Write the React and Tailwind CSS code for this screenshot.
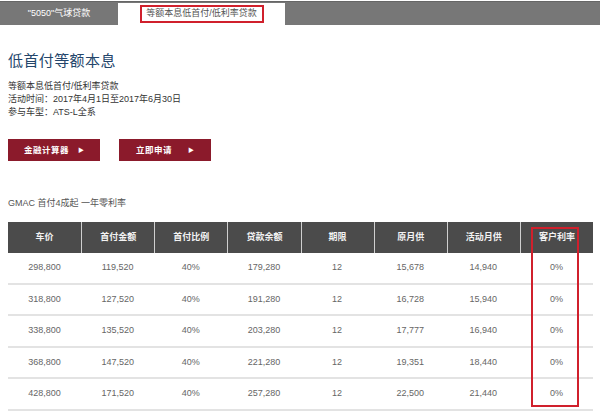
const rows = [
  ['298,800', '119,520', '40%', '179,280', '12', '15,678', '14,940', '0%'],
  ['318,800', '127,520', '40%', '191,280', '12', '16,728', '15,940', '0%'],
  ['338,800', '135,520', '40%', '203,280', '12', '17,777', '16,940', '0%'],
  ['368,800', '147,520', '40%', '221,280', '12', '19,351', '18,440', '0%'],
  ['428,800', '171,520', '40%', '257,280', '12', '22,500', '21,440', '0%'],
];

const heads = ['车价', '首付金额', '首付比例', '贷款余额', '期限', '原月供', '活动月供', '客户利率'];

function RedButton({ label, gap }) {
  return (
    <button className={'flex items-center justify-center w-[92px] h-[22px] bg-[#8b1a2b] text-white text-[8.5px] font-bold ' + gap}>
      <span className="tracking-[0.5px]">{label}</span>
      <span className="text-[6px]">▶</span>
    </button>
  );
}

export default function App() {
  return (
    <div
      className="w-[600px] h-[415px] bg-white overflow-hidden"
      style={{ fontFamily: '"Liberation Sans", "Noto Sans CJK SC", sans-serif' }}
    >
      {/* tabs */}
      <div className="mt-[1px] h-[24px] flex items-end bg-[#777777] border-t border-[#666666]">
        <div className="w-[118px] h-full flex items-center justify-center text-white text-[9px]">
          "5050"气球贷款
        </div>
        <div className="w-[167px] h-[22px] bg-white flex items-center justify-center">
          <div className="w-[124px] h-[18px] border-2 border-[#d0202c] flex items-center justify-center text-[9px] text-[#555]">
            等额本息低首付/低利率贷款
          </div>
        </div>
      </div>

      <div className="px-[8px]">
        <h1 className="pt-[26px] text-[15px] leading-[20px] text-[#24466b] tracking-[0.4px]">低首付等额本息</h1>

        <div className="mt-[9px] text-[9px] leading-[13px] text-[#333]">
          <p>等额本息低首付/低利率贷款</p>
          <p>活动时间：2017年4月1日至2017年6月30日</p>
          <p>参与车型：ATS-L全系</p>
        </div>

        <div className="mt-[20px] flex gap-[19px]">
          <RedButton label="金融计算器" gap="gap-[9px]" />
          <RedButton label="立即申请" gap="gap-[16px]" />
        </div>

        <p className="mt-[36px] text-[9px] leading-[13px] text-[#555]">GMAC 首付4成起 一年零利率</p>

        <div className="relative mt-[12px] w-[585px]">
          <div className="grid grid-cols-8 h-[31px] bg-[#4b4b4b]">
            {heads.map((h, i) => (
              <div
                key={h}
                className={
                  'flex items-center justify-center text-[#f2f2f2] text-[9px] font-bold ' +
                  (i > 0 ? 'border-l border-[#cfcfcf]' : '')
                }
              >
                {h}
              </div>
            ))}
          </div>
          {rows.map((r, ri) => (
            <div key={ri} className="grid grid-cols-8 h-[31.5px] border-b-2 border-[#e3e3e3]">
              {r.map((c, ci) => (
                <div key={ci} className="flex items-center justify-center text-[9px] text-[#666]">
                  {c}
                </div>
              ))}
            </div>
          ))}
          <div className="absolute left-[523px] top-[5px] w-[48px] h-[180px] border-2 border-[#d0202c]" />
        </div>
      </div>
    </div>
  );
}
